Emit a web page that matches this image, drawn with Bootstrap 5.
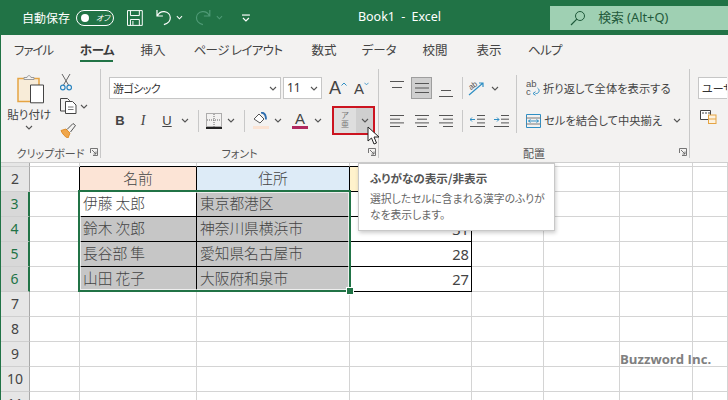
<!DOCTYPE html>
<html lang="ja">
<head>
<meta charset="utf-8">
<title>Book1 - Excel</title>
<link href="https://cdn.jsdelivr.net/npm/bootstrap@5.3.0/dist/css/bootstrap.min.css" rel="stylesheet">
<style>
html,body{margin:0;height:400px;overflow:hidden;background:#fff}
body{font-family:"Noto Sans CJK JP","Noto Sans",sans-serif;font-feature-settings:"palt";color:#444}
.appframe{width:728px;height:400px;border-left:1px solid #217346;position:relative;overflow:hidden}
.titlebar{height:35px;background:#217346;color:#fff;margin-left:-1px;font-size:12px}
.qat-label{margin-left:22px;width:55px;font-size:12px}
.autotoggle{width:38px;height:16px;border:1.5px solid #fff;border-radius:8px;padding:0 3px 0 4px}
.toggledot{width:8px;height:8px;border-radius:50%;background:#fff}
.toggletext{font-size:8px;line-height:1;font-style:italic}
.qat-save{margin-left:13px}.qat-undo{margin-left:13px}.qat-chev{margin-left:5px}.qat-redo{margin-left:12px}.qat-more{margin-left:19px}
.doc-title{margin-left:103px;width:200px;font-size:12.5px;font-family:"Noto Sans",sans-serif;word-spacing:3px;padding-left:5px}
.searchbox{margin-left:auto;width:180px;height:24px;background:#9fd0b3;color:#1f5a3b;padding-left:20px;font-size:12.8px;gap:12px;font-family:"Noto Sans","Noto Sans CJK JP",sans-serif}
.tabs{height:30px;background:#f3f2f1;font-size:12.5px;color:#444}
.tabitem{height:30px;display:flex;align-items:center;justify-content:center;position:relative}
.tabitem:nth-child(1){width:65px;letter-spacing:-1px}.tabitem:nth-child(2){width:62px;font-weight:700;color:#3b3b3b;letter-spacing:-.4px}.tabitem:nth-child(3){width:50px}.tabitem:nth-child(4){width:120px;letter-spacing:-.6px}.tabitem:nth-child(5){width:52px}.tabitem:nth-child(6){width:58px}.tabitem:nth-child(7){width:54px}.tabitem:nth-child(8){width:54px}.tabitem:nth-child(9){width:58px;letter-spacing:-.6px}
.tabmark{position:absolute;left:14px;right:15px;bottom:3px;height:2.5px;background:#217346}
.ribbon{height:98px;background:#f3f2f1;border-bottom:1px solid #cfcfcf;padding:4px 0 5px;font-size:11px;color:#444}
.rgroup{height:89px;position:relative;flex:none;border-right:1px solid #c8c8c8}
.rg-clip{width:100px}.rg-font{width:278px}.rg-align{width:311px}.rg-num{width:37px;border-right:0;overflow:hidden}
.rcontent{height:77px}
.rlabel{height:14px;line-height:14px;text-align:center;font-size:11px;color:#555}
.launch{position:absolute;right:2px;bottom:2px;line-height:0}
.pastecol{width:57px;padding-top:5px;font-size:11.5px;line-height:13px}
.pasteicon{margin-left:4px}
.pastelabel{margin-top:4px}
.toolcol{width:43px;padding:3px 0 0 0;gap:4px}
.toolitem{height:20px;padding-left:3px;gap:3px}
.fontrow1{padding:8px 0 0 8px;height:37px}
.inputbox{background:#fff;border:1px solid #c6c6c6;height:22px;padding:0 3px;font-size:11px;color:#333;justify-content:space-between}
.fontname{width:172px;letter-spacing:-.6px}.fontsize{width:39px;margin-left:2px;font-family:"Noto Sans",sans-serif;font-size:12px}
.growa{margin-left:7px;width:25px;font-size:18px;line-height:1;font-family:"Liberation Sans",sans-serif;color:#444;height:22px}
.growb{margin-left:0;width:15px;font-size:15px;line-height:1;font-family:"Liberation Sans",sans-serif;color:#444;height:22px}
.fontrow2{display:grid;grid-template-columns:22px 24px 24px 12px 15px 16px 18px 8px 26px 8px 4px 28px 8px 10px 43px;height:29px;margin-top:0;padding-left:8px;align-items:center;justify-items:center}
.fbtn{font-size:13px;line-height:1;color:#444}
.fb{font-family:"Liberation Sans",sans-serif;font-weight:700}.fi{font-family:"Liberation Serif",serif;font-style:italic;font-size:14px}.fu{font-family:"Liberation Sans",sans-serif;text-decoration:underline}
.vsep{width:1px;height:22px;background:#c8c8c8}
.furibox{width:43px;height:29px;border:2px solid #cc1420;background:#dedede;display:flex}
.furimain{width:22px;text-align:center;font-size:8px;line-height:9px;color:#777;padding-top:2px}
.furichev{flex:1;background:#cfcfcf;display:flex;align-items:center;justify-content:center}
.aligngrid{display:grid;grid-template-columns:26px 23px 26px 6px 24px 24px 6px 170px;grid-template-rows:22px 23px;row-gap:10px;padding:8px 0 0 5px;justify-items:center;align-items:center}
.midon{width:21px;height:22px;background:#cfcfcf;border:1px solid #9e9e9e;display:flex;align-items:center;justify-content:center}
.bigsep{width:1px;height:58px;background:#c8c8c8;grid-row:1 / span 2;grid-column:7;margin-top:-2px}
.wraptext{grid-column:8;justify-self:start;gap:3px;padding-left:7px;font-size:11.3px;color:#444;white-space:nowrap;width:100%}
.orient{justify-self:start;gap:6px;grid-column:5 / span 2;padding-left:3px}
.numbox{margin:8px 0 0 8px;width:60px;justify-content:flex-start;white-space:nowrap}
.numicon{margin:11px 0 0 10px}
.sheetwrap{position:relative;height:237px;overflow:hidden}
.sheet{border-collapse:separate;border-spacing:0;table-layout:fixed;width:727px;font-size:14.7px;color:#444;font-feature-settings:normal}
.sheet col:nth-child(1){width:29px}.sheet col:nth-child(2){width:50px}.sheet col:nth-child(3){width:117px}.sheet col:nth-child(4){width:153px}.sheet col:nth-child(5){width:122px}.sheet col:nth-child(6){width:72px}.sheet col:nth-child(7){width:76px}.sheet col:nth-child(8){width:73px}.sheet col:nth-child(9){width:35px}
.sheet td,.sheet th{border-right:1px solid #d4d4d4;border-bottom:1px solid #d4d4d4;height:25px;padding:0 0 2px 3px;font-weight:300;overflow:hidden;white-space:nowrap;line-height:1}
.sheet .r1 td,.sheet .r1 th{height:4px;line-height:0;font-size:0;padding:0}
.sheet th{background:#e6e6e6;border-right:1px solid #a8a8a8;border-bottom:1px solid #cfcfcf;text-align:center;padding:0;font-size:14px;font-family:"Noto Sans",sans-serif;color:#444;font-weight:400}
.sheet th.rsel{background:#d8d8d8;color:#217346;border-right:2px solid #217346}
.sheet td.bkr{border-right-color:#000}.sheet td.bkb{border-bottom-color:#000}
.sheet td.hd{text-align:center;padding:0 0 2px}
.hd-a{background:#fce4d6}.hd-b{background:#ddebf7}.hd-c{background:#fff2cc}
.sheet td.selcell{background:#c6c6c6}
.sheet td.num{text-align:right;padding:0 2px 0 0;font-family:"Noto Sans",sans-serif;font-weight:400}
.selframe{position:absolute;left:77px;top:27px;width:273px;height:102px;border:2px solid #217346;box-shadow:inset 0 0 0 1px rgba(255,255,255,.7);pointer-events:none}
.selhandle{position:absolute;right:-4px;bottom:-4px;width:6px;height:6px;background:#217346;box-shadow:0 0 0 1px #fff}
.tipbox{position:absolute;left:357px;top:163px;width:197px;height:68px;background:#fff;border:1px solid #c8c8c8;box-shadow:1px 2px 4px rgba(0,0,0,.2);padding:6px 8px 6px 11px;color:#666;font-size:10.8px;line-height:16px;z-index:3}
.tiptitle{font-size:11.6px;font-weight:700;color:#555;line-height:16px;margin-bottom:4px}
.pointer{position:absolute;left:366px;top:126px;z-index:4;line-height:0}
.wmark{position:absolute;left:619px;top:350px;font-family:"Open Sans","Noto Sans",sans-serif;font-weight:700;font-size:13.2px;line-height:18px;color:#808080;z-index:2}
</style>
</head>
<body>
<svg class="d-none" xmlns="http://www.w3.org/2000/svg">
<symbol id="chev" viewBox="0 0 8 5"><path d="M1 1l3 3 3-3" fill="none" stroke="#555" stroke-width="1.1"/></symbol>
<symbol id="lnch" viewBox="0 0 8 8"><path d="M.5 5V.5h7v7H3M2 2l4 4M6 3.500V6H3.500" fill="none" stroke="#666" stroke-width=".9"/></symbol>
<symbol id="lines" viewBox="0 0 14 10"><path d="M0 .5h14M0 5h14M0 9.500h14" stroke="#555" stroke-width="1"/></symbol>
</svg>
<div class="appframe">
  <div class="titlebar d-flex align-items-center">
    <div class="qat-label">自動保存</div>
    <div class="autotoggle d-flex align-items-center justify-content-between"><span class="toggledot"></span><span class="toggletext">オフ</span></div>
    <svg class="qat-save" width="16" height="16" viewBox="0 0 16 16"><path d="M.5.5h15v15H.5zM3.500.5v5h9v-5M3.500 15.500v-6h9v6M6 11v4" fill="none" stroke="#fff" stroke-width="1"/></svg>
    <svg class="qat-undo" width="16" height="17" viewBox="0 0 16 17"><path d="M1 1v6h6M1.500 6.500C3 3.500 5.500 2.200 8.500 2.500c3.500.4 6 3 6 6.200 0 3.500-2.700 6-6.500 7" fill="none" stroke="#fff" stroke-width="1.200"/></svg>
    <svg class="qat-chev" width="7" height="5" viewBox="0 0 8 5"><path d="M1 1l3 3 3-3" fill="none" stroke="#fff" stroke-width="1.200"/></svg>
    <svg class="qat-redo" width="16" height="17" viewBox="0 0 16 17"><path d="M15 1v6H9M14.500 6.500C13 3.500 10.500 2.200 7.500 2.500c-3.500.4-6 3-6 6.200 0 3.500 2.700 6 6.500 7" fill="none" stroke="#4f9a76" stroke-width="1.200"/></svg>
    <svg class="qat-chev" width="7" height="5" viewBox="0 0 8 5"><path d="M1 1l3 3 3-3" fill="none" stroke="#4f9a76" stroke-width="1.200"/></svg>
    <svg class="qat-more" width="8" height="8" viewBox="0 0 8 8"><path d="M0 1h8" stroke="#fff" stroke-width="1.200"/><path d="M1 4l3 3 3-3" fill="none" stroke="#fff" stroke-width="1.200"/></svg>
    <div class="doc-title">Book1 - Excel</div>
    <div class="searchbox d-flex align-items-center">
      <svg width="16" height="16" viewBox="0 0 16 16"><circle cx="10" cy="6" r="4.500" fill="none" stroke="#1f5a3b" stroke-width="1"/><path d="M6.800 9.200L1 15" stroke="#1f5a3b" stroke-width="1.200"/></svg>
      <span>検索 (Alt+Q)</span>
    </div>
  </div>
  <div class="tabs d-flex">
    <div class="tabitem">ファイル</div>
    <div class="tabitem">ホーム<span class="tabmark"></span></div>
    <div class="tabitem">挿入</div>
    <div class="tabitem">ページ レイアウト</div>
    <div class="tabitem">数式</div>
    <div class="tabitem">データ</div>
    <div class="tabitem">校閲</div>
    <div class="tabitem">表示</div>
    <div class="tabitem">ヘルプ</div>
  </div>
  <div class="ribbon d-flex">
    <div class="rgroup rg-clip">
      <div class="rcontent d-flex">
        <div class="pastecol d-flex flex-column align-items-center">
          <svg class="pasteicon" width="28" height="30" viewBox="0 0 28 29"><path d="M1 4h21v23H1z" fill="#f8ecd8" stroke="#e5a443" stroke-width="1.500"/><path d="M7 5V3h3c.5-2.500 3.500-2.500 4 0h3v2z" fill="#f3f2f1" stroke="#9a9a9a"/><path d="M13.500 10.500h13v17.800h-13z" fill="#fff" stroke="#444"/></svg>
          <div class="pastelabel">貼り付け</div>
          <svg class="mt-1" width="8" height="5"><use href="#chev"/></svg>
        </div>
        <div class="toolcol d-flex flex-column">
          <div class="toolitem d-flex align-items-center"><svg width="12" height="17" viewBox="0 0 12 17"><path d="M2 0l6.500 11M10 0L3.500 11" stroke="#666" stroke-width="1"/><circle cx="2.800" cy="13.500" r="2.300" fill="none" stroke="#2e86c1" stroke-width="1.200"/><circle cx="9.200" cy="13.500" r="2.300" fill="none" stroke="#2e86c1" stroke-width="1.200"/></svg></div>
          <div class="toolitem d-flex align-items-center"><svg width="17" height="16" viewBox="0 0 17 16"><path d="M5 13H.5V.5h7l2 2v1" fill="none" stroke="#444"/><path d="M5.500 3.500h7l3.500 3.500v8.500H5.500z" fill="#fff" stroke="#444"/><path d="M8 9h5.500M8 11.500h5.500" stroke="#777"/></svg><svg width="8" height="5"><use href="#chev"/></svg></div>
          <div class="toolitem d-flex align-items-center"><svg width="16" height="15" viewBox="0 0 16 15"><path d="M1 7.500l5-1.500 4 4-2 5C5 14 2.500 11 1 7.500z" fill="#f0a64a" stroke="#e08e2a"/><path d="M7 6.500l6-6 2.500 2-5 6.500" fill="#f3f2f1" stroke="#555"/></svg></div>
        </div>
      </div>
      <div class="rlabel">クリップボード</div>
      <svg class="launch" width="8" height="8"><use href="#lnch"/></svg>
    </div>
    <div class="rgroup rg-font">
      <div class="rcontent">
        <div class="fontrow1 d-flex">
          <div class="inputbox fontname d-flex align-items-center"><span>游ゴシック</span><svg width="8" height="5"><use href="#chev"/></svg></div>
          <div class="inputbox fontsize d-flex align-items-center"><span>11</span><svg width="8" height="5"><use href="#chev"/></svg></div>
          <div class="growa d-flex align-items-center"><span>A</span><svg class="mb-2" width="6" height="4" viewBox="0 0 6 4"><path d="M.5 3.500L3 1l2.500 2.500" fill="none" stroke="#2f8fc4"/></svg></div>
          <div class="growb d-flex align-items-center ms-0"><span>A</span><svg class="mb-2" width="6" height="4" viewBox="0 0 6 4"><path d="M.5.500L3 3 5.500.500" fill="none" stroke="#2f8fc4"/></svg></div>
        </div>
        <div class="fontrow2">
          <span class="fbtn fb">B</span>
          <span class="fbtn fi">I</span>
          <span class="fbtn fu">U</span>
          <svg width="8" height="5"><use href="#chev"/></svg>
          <span class="vsep"></span>
          <svg width="16" height="16" viewBox="0 0 16 16"><path d="M.5.500h15v13H.5z" fill="none" stroke="#666" stroke-dasharray="1 1"/><path d="M8 1v13M1 7h14" stroke="#666" stroke-dasharray="1 1"/><path d="M0 15h16" stroke="#222" stroke-width="2"/></svg>
          <svg width="8" height="5"><use href="#chev"/></svg>
          <span class="vsep"></span>
          <svg width="16" height="17" viewBox="0 0 16 17"><path d="M1 7l5-5 5 5-4 4z" fill="#fff" stroke="#555"/><path d="M8 .5c4 0 5 3 5 7" fill="none" stroke="#2f6fb0" stroke-width="1.800"/><rect y="14" width="16" height="3" fill="#fbe3d3"/></svg>
          <svg width="8" height="5"><use href="#chev"/></svg>
          <span></span>
          <svg width="16" height="17" viewBox="0 0 16 17"><text x="8" y="12" text-anchor="middle" font-family="Liberation Sans" font-size="15" fill="#444">A</text><rect y="14" width="16" height="3" fill="#b0285e"/></svg>
          <svg width="8" height="5"><use href="#chev"/></svg>
          <span></span>
          <div class="furibox"><div class="furimain">ア<br>亜</div><div class="furichev"><svg width="8" height="5"><use href="#chev"/></svg></div></div>
        </div>
      </div>
      <div class="rlabel">フォント</div>
      <svg class="launch" width="8" height="8"><use href="#lnch"/></svg>
    </div>
    <div class="rgroup rg-align">
      <div class="rcontent">
        <div class="aligngrid">
          <svg class="mb-2" width="14" height="7" viewBox="0 0 14 7"><path d="M0 .5h14M2 6.500h10" stroke="#555"/></svg>
          <div class="midon"><svg width="14" height="10"><use href="#lines"/></svg></div>
          <svg class="mt-2" width="14" height="9" viewBox="0 0 14 9"><path d="M2 2.500h10M0 8.500h14" stroke="#555"/></svg>
          <span class="vsep"></span>
          <div class="orient d-flex align-items-center"><svg width="17" height="15" viewBox="0 0 17 15"><path d="M1 14L15 2M11 2h4v4" fill="none" stroke="#2f8fc4" stroke-width="1.200"/><text x="1" y="8" font-size="8" font-family="Liberation Sans" fill="#555" transform="rotate(-35 4 6)">ab</text></svg><svg width="8" height="5"><use href="#chev"/></svg></div>
          <span class="bigsep"></span>
          <div class="wraptext d-flex align-items-center"><svg width="14" height="16" viewBox="0 0 14 16"><text x="0" y="7" font-size="9.500" font-family="Liberation Sans" fill="#555">ab</text><text x="0" y="15" font-size="9.500" font-family="Liberation Sans" fill="#555">c</text><path d="M11.500 8c3 2 1.500 6-2 5.500M7 13.500l2.500-1.800M7 13.500l2.500 1.800" fill="none" stroke="#2f8fc4"/></svg><span>折り返して全体を表示する</span></div>
          <svg width="14" height="14" viewBox="0 0 14 14"><path d="M0 1.500h14M0 5.200h10M0 8.900h14M0 12.500h10" stroke="#555"/></svg>
          <svg width="14" height="14" viewBox="0 0 14 14"><path d="M0 1.500h14M2 5.200h10M0 8.900h14M2 12.500h10" stroke="#555"/></svg>
          <svg width="14" height="14" viewBox="0 0 14 14"><path d="M0 1.500h14M4 5.200h10M0 8.900h14M4 12.500h10" stroke="#555"/></svg>
          <span class="vsep"></span>
          <svg width="15" height="14" viewBox="0 0 15 14"><path d="M7 1.500h8M7 5.200h8M7 8.900h8M0 12.500h15" stroke="#555"/><path d="M5 5.500H0M2 3.500l-2 2 2 2" fill="none" stroke="#2f8fc4"/></svg>
          <svg width="15" height="14" viewBox="0 0 15 14"><path d="M7 1.500h8M7 5.200h8M7 8.900h8M0 12.500h15" stroke="#555"/><path d="M0 5.500h5M3 3.500l2 2-2 2" fill="none" stroke="#2f8fc4"/></svg>
          <div class="wraptext d-flex align-items-center"><svg width="15" height="14" viewBox="0 0 15 14"><path d="M.5.500h14v13H.5z" fill="none" stroke="#2f8fc4"/><path d="M0 4h15M0 10h15" stroke="#7a7a7a"/><path d="M2.500 7h10M4.500 5.500L2.500 7l2 1.500M10.500 5.500l2 1.500-2 1.500" fill="none" stroke="#2f8fc4"/></svg><span>セルを結合して中央揃え</span><svg class="ms-2" width="8" height="5"><use href="#chev"/></svg></div>
        </div>
      </div>
      <div class="rlabel">配置</div>
      <svg class="launch" width="8" height="8"><use href="#lnch"/></svg>
    </div>
    <div class="rgroup rg-num">
      <div class="inputbox numbox d-flex align-items-center"><span>ユーザー定義</span></div>
      <svg class="numicon" width="17" height="14" viewBox="0 0 17 14"><path d="M.5.500h10v9H.5z" fill="#fff" stroke="#444"/><path d="M2 3h2M5 3h2M8 3h2" stroke="#444"/><rect x="8.500" y="5" width="7.500" height="8.500" fill="#fdf2df" stroke="#e5a443"/><path d="M8.500 9h7.500" stroke="#e5a443"/></svg>
    </div>
  </div>
  <div class="sheetwrap">
    <table class="sheet">
      <colgroup><col><col><col><col><col><col><col><col><col></colgroup>
      <tbody>
        <tr class="r1"><th></th><td></td><td class="bkb"></td><td class="bkb"></td><td class="bkb"></td><td></td><td></td><td></td><td></td></tr>
        <tr><th>2</th><td class="bkr"></td><td class="hd hd-a bkr bkb">名前</td><td class="hd hd-b bkr bkb">住所</td><td class="hd hd-c bkr bkb">年齢</td><td></td><td></td><td></td><td></td></tr>
        <tr><th class="rsel">3</th><td class="bkr"></td><td class="bkr bkb">伊藤 太郎</td><td class="selcell bkr bkb">東京都港区</td><td class="num bkr bkb">32</td><td></td><td></td><td></td><td></td></tr>
        <tr><th class="rsel">4</th><td class="bkr"></td><td class="selcell bkr bkb">鈴木 次郎</td><td class="selcell bkr bkb">神奈川県横浜市</td><td class="num bkr bkb">31</td><td></td><td></td><td></td><td></td></tr>
        <tr><th class="rsel">5</th><td class="bkr"></td><td class="selcell bkr bkb">長谷部 隼</td><td class="selcell bkr bkb">愛知県名古屋市</td><td class="num bkr bkb">28</td><td></td><td></td><td></td><td></td></tr>
        <tr><th class="rsel">6</th><td class="bkr"></td><td class="selcell bkr bkb">山田 花子</td><td class="selcell bkr bkb">大阪府和泉市</td><td class="num bkr bkb">27</td><td></td><td></td><td></td><td></td></tr>
        <tr><th>7</th><td></td><td></td><td></td><td></td><td></td><td></td><td></td><td></td></tr>
        <tr><th>8</th><td></td><td></td><td></td><td></td><td></td><td></td><td></td><td></td></tr>
        <tr><th>9</th><td></td><td></td><td></td><td></td><td></td><td></td><td></td><td></td></tr>
        <tr><th>10</th><td></td><td></td><td></td><td></td><td></td><td></td><td></td><td></td></tr>
        <tr><th>11</th><td></td><td></td><td></td><td></td><td></td><td></td><td></td><td></td></tr>
      </tbody>
    </table>
    <div class="selframe"><span class="selhandle"></span></div>
  </div>
  <div class="tipbox">
    <div class="tiptitle">ふりがなの表示/非表示</div>
    <div>選択したセルに含まれる漢字のふりがなを表示します。</div>
  </div>
  <svg class="pointer" width="13" height="20" viewBox="0 0 13 20"><path d="M1 1v14l3.500-3 2.500 6 2.500-1-2.500-6H12z" fill="#fff" stroke="#222" stroke-width="1"/></svg>
  <div class="wmark">Buzzword Inc.</div>
</div>
<script src="https://cdn.jsdelivr.net/npm/bootstrap@5.3.0/dist/js/bootstrap.bundle.min.js"></script>
</body>
</html>
